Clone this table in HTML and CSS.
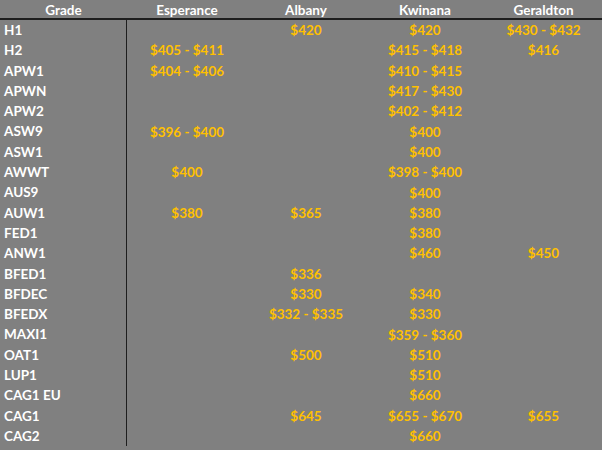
FILE: index.html
```html
<!DOCTYPE html>
<html>
<head>
<meta charset="utf-8">
<link rel="stylesheet" href="styles.css">
</head>
<body>
<div class="sheet">
  <div class="row head">
    <div class="c g">Grade</div><div class="c">Esperance</div><div class="c">Albany</div><div class="c">Kwinana</div><div class="c">Geraldton</div>
  </div>
  <div class="body">
    <div class="row"><div class="c g">H1</div><div class="c"></div><div class="c">$420</div><div class="c">$420</div><div class="c">$430 - $432</div></div>
    <div class="row"><div class="c g">H2</div><div class="c">$405 - $411</div><div class="c"></div><div class="c">$415 - $418</div><div class="c">$416</div></div>
    <div class="row"><div class="c g">APW1</div><div class="c">$404 - $406</div><div class="c"></div><div class="c">$410 - $415</div><div class="c"></div></div>
    <div class="row"><div class="c g">APWN</div><div class="c"></div><div class="c"></div><div class="c">$417 - $430</div><div class="c"></div></div>
    <div class="row"><div class="c g">APW2</div><div class="c"></div><div class="c"></div><div class="c">$402 - $412</div><div class="c"></div></div>
    <div class="row"><div class="c g">ASW9</div><div class="c">$396 - $400</div><div class="c"></div><div class="c">$400</div><div class="c"></div></div>
    <div class="row"><div class="c g">ASW1</div><div class="c"></div><div class="c"></div><div class="c">$400</div><div class="c"></div></div>
    <div class="row"><div class="c g">AWWT</div><div class="c">$400</div><div class="c"></div><div class="c">$398 - $400</div><div class="c"></div></div>
    <div class="row"><div class="c g">AUS9</div><div class="c"></div><div class="c"></div><div class="c">$400</div><div class="c"></div></div>
    <div class="row"><div class="c g">AUW1</div><div class="c">$380</div><div class="c">$365</div><div class="c">$380</div><div class="c"></div></div>
    <div class="row"><div class="c g">FED1</div><div class="c"></div><div class="c"></div><div class="c">$380</div><div class="c"></div></div>
    <div class="row"><div class="c g">ANW1</div><div class="c"></div><div class="c"></div><div class="c">$460</div><div class="c">$450</div></div>
    <div class="row"><div class="c g">BFED1</div><div class="c"></div><div class="c">$336</div><div class="c"></div><div class="c"></div></div>
    <div class="row"><div class="c g">BFDEC</div><div class="c"></div><div class="c">$330</div><div class="c">$340</div><div class="c"></div></div>
    <div class="row"><div class="c g">BFEDX</div><div class="c"></div><div class="c">$332 - $335</div><div class="c">$330</div><div class="c"></div></div>
    <div class="row"><div class="c g">MAXI1</div><div class="c"></div><div class="c"></div><div class="c">$359 - $360</div><div class="c"></div></div>
    <div class="row"><div class="c g">OAT1</div><div class="c"></div><div class="c">$500</div><div class="c">$510</div><div class="c"></div></div>
    <div class="row"><div class="c g">LUP1</div><div class="c"></div><div class="c"></div><div class="c">$510</div><div class="c"></div></div>
    <div class="row"><div class="c g">CAG1 EU</div><div class="c"></div><div class="c"></div><div class="c">$660</div><div class="c"></div></div>
    <div class="row"><div class="c g">CAG1</div><div class="c"></div><div class="c">$645</div><div class="c">$655 - $670</div><div class="c">$655</div></div>
    <div class="row"><div class="c g">CAG2</div><div class="c"></div><div class="c"></div><div class="c">$660</div><div class="c"></div></div>
  </div>
</div>
</body>
</html>
```

FILE: styles.css
```css
html, body {
  margin: 0;
  padding: 0;
  background: #808080;
}
.sheet {
  width: 602px;
  height: 450px;
  overflow: hidden;
  background: #808080;
  font-family: Lato, "Liberation Sans", sans-serif;
  font-weight: 700;
  font-size: 13.5px;
  color: #ffc000;
}
.row {
  display: grid;
  grid-template-columns: 127px 120px 118px 120px 117px;
  height: 20.3px;
  align-items: center;
}
.head {
  height: 20px;
  color: #ffffff;
  border-bottom: 2px solid #1e1e1e;
  box-sizing: border-box;
}
.head .c.g {
  text-align: center;
  padding-left: 0;
}
.c {
  text-align: center;
  white-space: nowrap;
  line-height: 20px;
}
.c.g {
  text-align: left;
  padding-left: 4px;
  color: #ffffff;
  border-right: 1px solid #1e1e1e;
  height: 100%;
  box-sizing: border-box;
}
.head .c.g {
  border-right: none;
}
```
